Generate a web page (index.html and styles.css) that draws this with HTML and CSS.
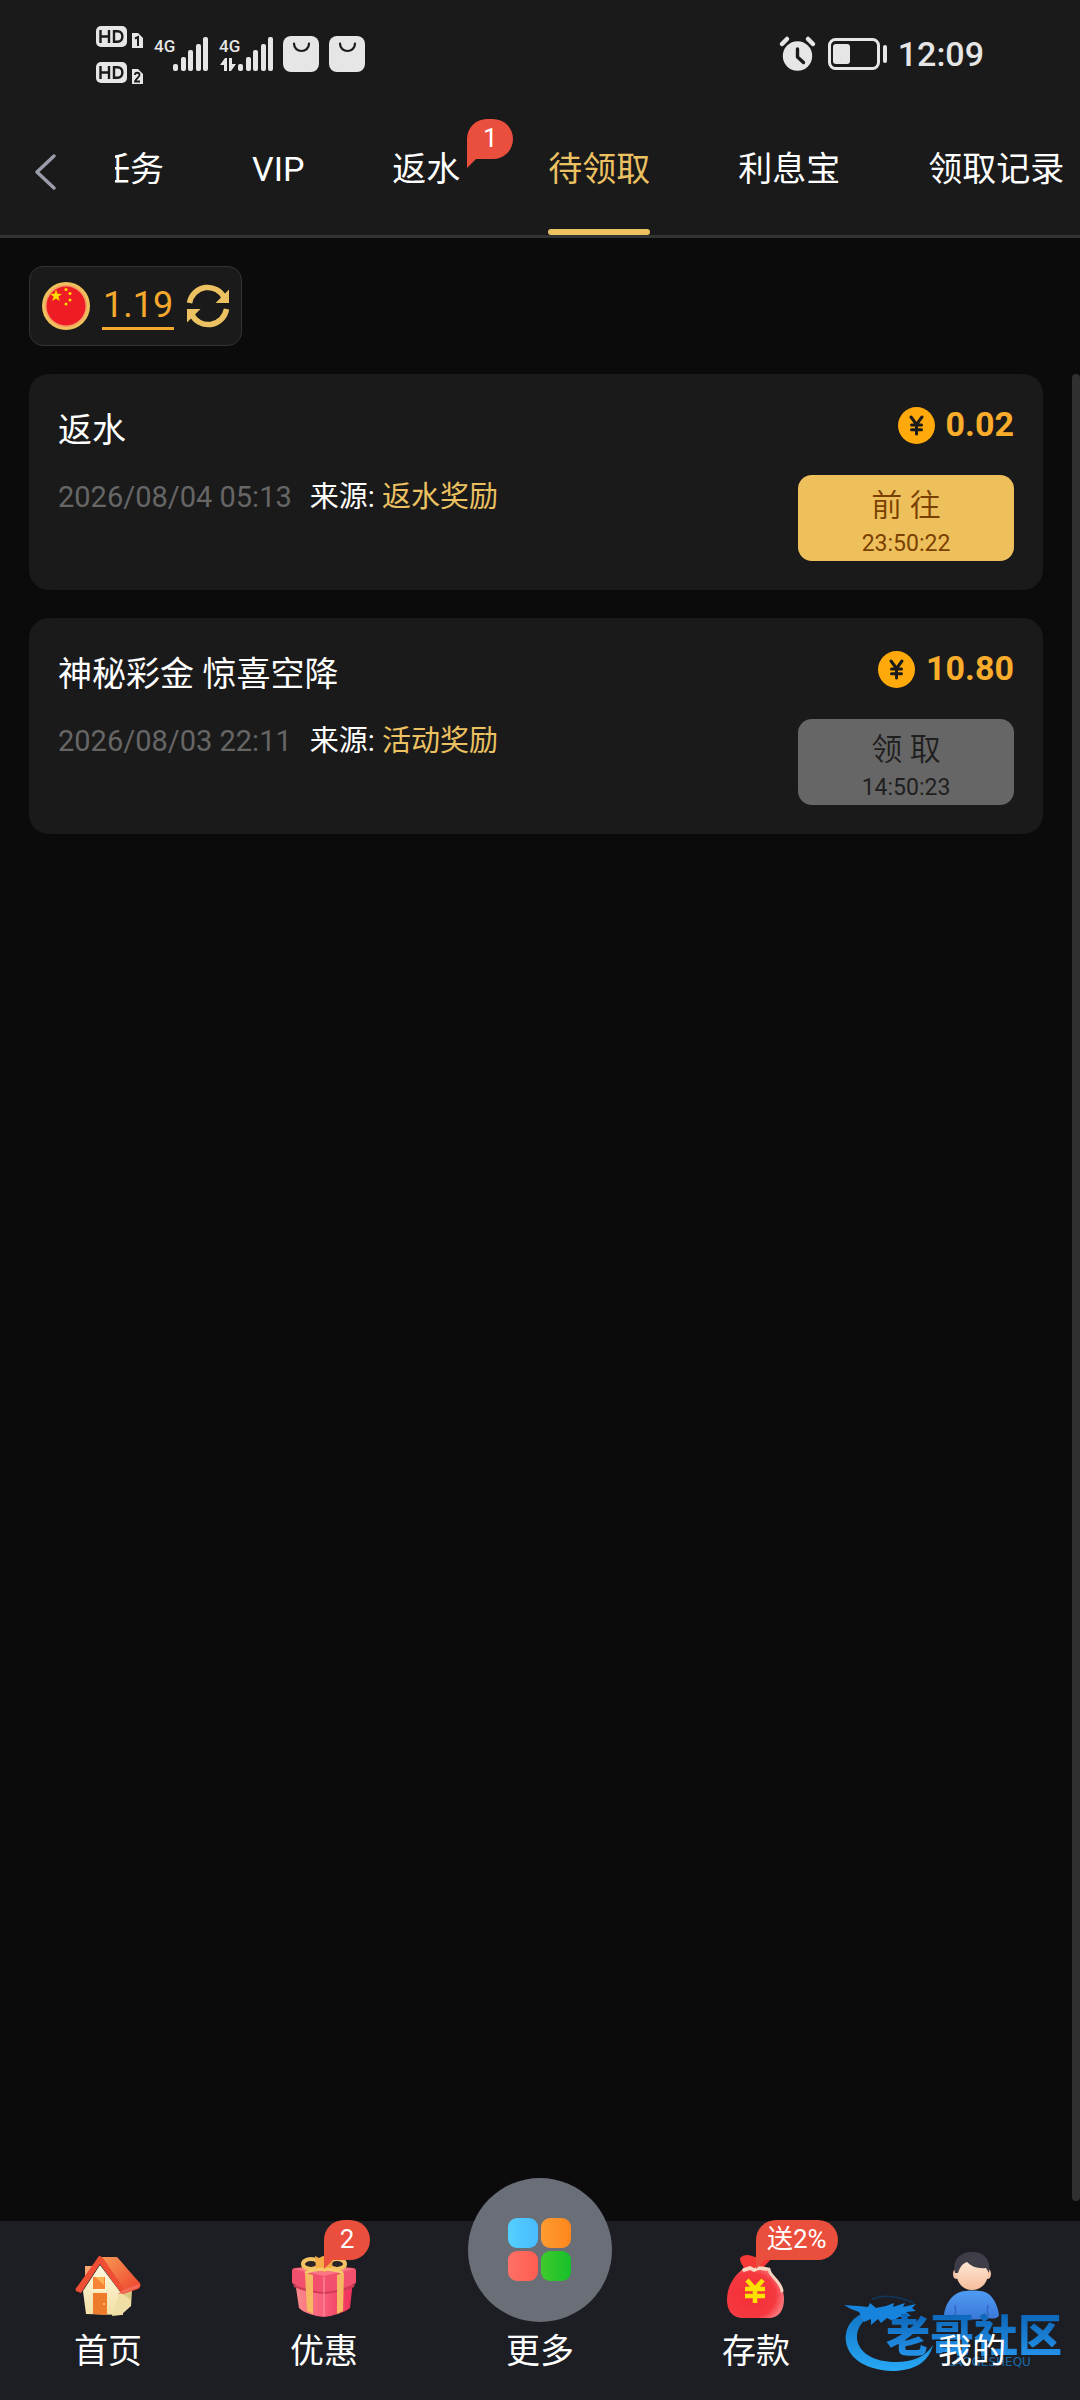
FILE: index.html
```html
<!DOCTYPE html>
<html lang="zh-CN">
<head>
    <meta charset="UTF-8">
    <meta name="viewport" content="width=device-width, initial-scale=1.0">
    <title>待领取</title>
    <link rel="stylesheet" href="styles.css">
</head>
<body>
    <header class="header">
        <div class="status-bar">
            <div class="status-group">
                <svg width="49" height="60" viewBox="0 0 49 60" fill="#e6e6e6">
                    <rect x="0" y="2" width="31" height="21" rx="5"/>
                    <path d="M36 9h6l5 5v10h-11z"/>
                    <rect x="0" y="38" width="31" height="21" rx="5"/>
                    <path d="M36 45h6l5 5v10h-11z"/>
                    <g fill="none" stroke="#1a1a1a" stroke-width="2.4">
                        <path d="M4.500 6v13M13 6v13M4.500 12.500h8.500M18 7.200v10.600h3.500c6.500 0 6.500-10.600 0-10.600z"/>
                        <path d="M4.500 42v13M13 42v13M4.500 48.500h8.500M18 43.200v10.600h3.500c6.500 0 6.500-10.600 0-10.600z"/>
                        <path stroke-width="2" d="M39 14.500l3-1.500v9"/>
                        <path stroke-width="1.800" d="M39 51c0-3 4.500-3 4.500 0 0 2-4 4-4.500 6.500h5"/>
                    </g>
                </svg>
                <svg width="55" height="36" viewBox="0 0 55 36" fill="#e6e6e6">
                    <text class="net" x="-1" y="16">4G</text>
                    <rect x="18" y="28" width="5" height="7" rx="2"/>
                    <rect x="26" y="21" width="5" height="14" rx="2"/>
                    <rect x="33" y="14" width="5" height="21" rx="2"/>
                    <rect x="41" y="8" width="5" height="27" rx="2"/>
                    <rect x="48" y="1" width="5" height="34" rx="2"/>
                </svg>
                <svg width="53" height="36" viewBox="0 0 53 36" fill="#e6e6e6">
                    <text class="net" x="-1" y="16">4G</text>
                    <path d="M0 29l5-7h2v13h-3v-6zM16 28l-5 7h-2V22h3v6z"/>
                    <rect x="18" y="28" width="5" height="7" rx="2"/>
                    <rect x="26" y="21" width="5" height="14" rx="2"/>
                    <rect x="33" y="14" width="5" height="21" rx="2"/>
                    <rect x="41" y="8" width="5" height="27" rx="2"/>
                    <rect x="48" y="1" width="5" height="34" rx="2"/>
                </svg>
                <svg width="36" height="36" viewBox="0 0 36 36">
                    <rect width="36" height="36" rx="8" fill="#e6e6e6"/>
                    <path d="M11 7.500c0 10 15 10 15 0" fill="none" stroke="#1a1a1a" stroke-width="2.200" stroke-linecap="round"/>
                </svg>
                <svg width="36" height="36" viewBox="0 0 36 36">
                    <rect width="36" height="36" rx="8" fill="#e6e6e6"/>
                    <path d="M11 7.500c0 10 15 10 15 0" fill="none" stroke="#1a1a1a" stroke-width="2.200" stroke-linecap="round"/>
                </svg>
            </div>
            <div class="status-group">
                <svg width="36" height="34" viewBox="0 0 36 34">
                    <circle cx="17.500" cy="19" r="14.700" fill="#e6e6e6"/>
                    <path d="M2 7l5-5M33 7l-5-5" stroke="#e6e6e6" stroke-width="4.500" stroke-linecap="round"/>
                    <path d="M17.500 12v8l6 5.500" fill="none" stroke="#1a1a1a" stroke-width="3.400" stroke-linecap="round" stroke-linejoin="round"/>
                </svg>
                <svg width="62" height="34" viewBox="0 0 62 34">
                    <rect x="3.500" y="2.500" width="49" height="29" rx="6" fill="none" stroke="#e6e6e6" stroke-width="3"/>
                    <rect x="7" y="7" width="17" height="20" rx="3" fill="#e6e6e6"/>
                    <rect x="57" y="8" width="4" height="18" rx="2" fill="#e6e6e6"/>
                </svg>
                <span class="clock">12:09</span>
            </div>
        </div>

        <div class="tab-bar">
            <button class="back" type="button" aria-label="返回">
                <svg width="24" height="38" viewBox="0 0 24 38">
                    <path d="M20 3L3 19l17 16" fill="none" stroke="#9b9caa" stroke-width="3.500" stroke-linecap="round" stroke-linejoin="round"/>
                </svg>
            </button>
            <nav class="tabs">
                <a class="tab" href="#">任务</a>
                <a class="tab" href="#">VIP</a>
                <a class="tab" href="#">返水<span class="badge">1</span></a>
                <a class="tab active" href="#">待领取</a>
                <a class="tab" href="#">利息宝</a>
                <a class="tab" href="#">领取记录</a>
            </nav>
        </div>
    </header>

    <main class="content">
        <div class="wallet">
            <svg width="48" height="48" viewBox="0 0 48 48">
                <circle cx="24" cy="24" r="24" fill="#efc15c"/>
                <circle cx="24" cy="24" r="21" fill="#f79a62"/>
                <circle cx="24" cy="24" r="19.500" fill="#ee1c25"/>
                <g fill="#ffde00">
                    <path d="M14 7.500l1.500 4.300 4.500.1-3.600 2.700 1.300 4.400-3.700-2.600-3.700 2.600 1.300-4.400L8 11.900l4.500-.1z"/>
                    <circle cx="24" cy="7.500" r="1.500"/>
                    <circle cx="28" cy="11.500" r="1.500"/>
                    <circle cx="28" cy="18" r="1.500"/>
                    <circle cx="24" cy="22" r="1.500"/>
                </g>
            </svg>
            <a class="balance" href="#">1.19</a>
            <button class="refresh" type="button" aria-label="刷新">
                <svg width="44" height="46" viewBox="0 0 44 46">
                    <path d="M3.500 20a18.500 18.500 0 0 1 35-5M40.500 26a18.500 18.500 0 0 1-35 5" fill="none" stroke="#ebc161" stroke-width="5.500"/>
                    <path d="M43 6.500V20H29.500zM1 39.500V26h13.500z" fill="#ebc161"/>
                </svg>
            </button>
        </div>

        <div class="list">
            <article class="card">
                <div class="info">
                    <h2 class="title">返水</h2>
                    <p class="meta"><time class="date">2026/08/04 05:13</time><span>来源: <em class="source">返水奖励</em></span></p>
                </div>
                <div class="side">
                    <div class="amount">
                        <svg width="37" height="37" viewBox="0 0 37 37">
                            <circle cx="18.500" cy="18.500" r="18.500" fill="#ffa90a"/>
                            <path d="M13 10l5.500 7.500L24 10M18.500 17.500V27M13.500 18h10M13.500 22.800h10" fill="none" stroke="#1b1b1b" stroke-width="3" stroke-linecap="round"/>
                        </svg>
                        <span>0.02</span>
                    </div>
                    <button class="claim" type="button">
                        <span class="claim-text">前 往</span>
                        <span class="countdown">23:50:22</span>
                    </button>
                </div>
            </article>

            <article class="card">
                <div class="info">
                    <h2 class="title">神秘彩金 惊喜空降</h2>
                    <p class="meta"><time class="date">2026/08/03 22:11</time><span>来源: <em class="source">活动奖励</em></span></p>
                </div>
                <div class="side">
                    <div class="amount">
                        <svg width="37" height="37" viewBox="0 0 37 37">
                            <circle cx="18.500" cy="18.500" r="18.500" fill="#ffa90a"/>
                            <path d="M13 10l5.500 7.500L24 10M18.500 17.500V27M13.500 18h10M13.500 22.800h10" fill="none" stroke="#1b1b1b" stroke-width="3" stroke-linecap="round"/>
                        </svg>
                        <span>10.80</span>
                    </div>
                    <button class="claim" type="button" disabled>
                        <span class="claim-text">领 取</span>
                        <span class="countdown">14:50:23</span>
                    </button>
                </div>
            </article>
            <div class="scroll-thumb"></div>
        </div>
    </main>

    <nav class="bottom-nav">
        <a class="nav-item" href="#">
            <svg class="nav-icon" viewBox="0 0 66 66">
                <defs>
                    <linearGradient id="roof" x1="0" y1="0" x2="1" y2="1">
                        <stop offset="0" stop-color="#f79a55"/>
                        <stop offset="1" stop-color="#ee3f2c"/>
                    </linearGradient>
                    <linearGradient id="wall" x1="0" y1="0" x2="0" y2="1">
                        <stop offset="0" stop-color="#fff8e0"/>
                        <stop offset="1" stop-color="#f3e0a4"/>
                    </linearGradient>
                </defs>
                <path d="M10 13h7v9l-7 8z" fill="#f5a873"/>
                <path d="M8 38L25 12l21 28 2 22-37-1z" fill="url(#wall)"/>
                <path d="M44 40l13-4-1 17-10 9-9 1z" fill="#efdfa6"/>
                <path d="M45 39l11-3v11z" fill="#dcc780"/>
                <path d="M25 4h17c3 3 19 22 23 26 1 3 0 5-2 6l-15 5c-2-1-17-22-23-31z" fill="url(#roof)"/>
                <path d="M24 3c2 0 3 1 4 2l21 31c1 2 0 4-2 5L25 11 6 40l-5-2c-1-2 0-3 1-4z" fill="#f04e34"/>
                <path d="M43 41c8-1 14-4 21-7l1-3-17 6z" fill="#f36b59"/>
                <path d="M18 24h12v12H18z" fill="#f58436"/>
                <path d="M20 24h9v8z" fill="#fbb257"/>
                <path d="M16 37h15" stroke="#fff4cd" stroke-width="2"/>
                <path d="M18 40h14v22l-14-1z" fill="#ef7c2c"/>
                <circle cx="29" cy="51" r="1" fill="#ffd27f"/>
            </svg>
            <span class="nav-label">首页</span>
        </a>
        <a class="nav-item" href="#">
            <span class="nav-icon">
                <svg class="nav-icon" viewBox="0 0 66 66">
                    <defs>
                        <linearGradient id="box" x1="0" y1="0" x2="1" y2="0">
                            <stop offset="0" stop-color="#fb8d8c"/>
                            <stop offset=".5" stop-color="#f95c78"/>
                            <stop offset="1" stop-color="#ee2f5a"/>
                        </linearGradient>
                    </defs>
                    <path d="M4 28h58l-3 27c-6 5-18 8-26 9-10-1-20-4-25-9z" fill="url(#box)"/>
                    <path d="M1 18c0-2 1-3 3-3l29-3 29 3c2 0 3 1 3 3v12c-9 5-20 8-32 9C20 38 10 35 1 30z" fill="#f2506c"/>
                    <path d="M2 16l31-4 31 4-31 7z" fill="#fb7585"/>
                    <path d="M2 31c9 4 19 7 31 8 12-1 22-4 31-8l-1 3c-9 4-19 6-30 7-11-1-21-3-30-7z" fill="#cf3a55"/>
                    <path d="M14 20l8 2v39l-6-3zM46 22l7-2-1 38-6 3z" fill="#f7b863"/>
                    <ellipse cx="20" cy="11" rx="8" ry="5" fill="#2a2429" stroke="#f3c364" stroke-width="4"/>
                    <ellipse cx="46" cy="11" rx="8" ry="5" fill="#2a2429" stroke="#f3c364" stroke-width="4"/>
                    <path d="M24 3l4 2 4-2 7 2 3-2-1 12-7 4-9-3z" fill="#f6ad45"/>
                    <path d="M14 20c10-5 28-5 38 0" fill="none" stroke="#f8c96b" stroke-width="3"/>
                    <path d="M33 24v39" stroke="#ff9aa4" stroke-width="1"/>
                </svg>
                <span class="badge">2</span>
            </span>
            <span class="nav-label">优惠</span>
        </a>
        <a class="nav-item" href="#">
            <span class="more">
                <svg width="64" height="64" viewBox="0 0 64 64">
                    <defs>
                        <linearGradient id="blue"><stop offset="0" stop-color="#55cfff"/><stop offset="1" stop-color="#48bcff"/></linearGradient>
                        <linearGradient id="orange"><stop offset="0" stop-color="#ff9c30"/><stop offset="1" stop-color="#ff861c"/></linearGradient>
                        <linearGradient id="red"><stop offset="0" stop-color="#ff7067"/><stop offset="1" stop-color="#ff5d50"/></linearGradient>
                        <linearGradient id="green"><stop offset="0" stop-color="#40ca2c"/><stop offset="1" stop-color="#16bf2a"/></linearGradient>
                    </defs>
                    <rect x="0" y="0" width="30" height="30" rx="9" fill="url(#blue)"/>
                    <rect x="33" y="0" width="30" height="30" rx="9" fill="url(#orange)"/>
                    <rect x="0" y="33" width="30" height="30" rx="9" fill="url(#red)"/>
                    <rect x="33" y="33" width="30" height="30" rx="9" fill="url(#green)"/>
                </svg>
            </span>
            <span class="nav-label">更多</span>
        </a>
        <a class="nav-item" href="#">
            <span class="nav-icon">
                <svg class="nav-icon" viewBox="0 0 66 66">
                    <defs>
                        <radialGradient id="bag" cx=".4" cy=".55" r=".6">
                            <stop offset="0" stop-color="#f52f38"/>
                            <stop offset=".75" stop-color="#f5383f"/>
                            <stop offset="1" stop-color="#fb7376"/>
                        </radialGradient>
                    </defs>
                    <path d="M17 5c5-4 8-3 12-2 5 2 8 0 12 1 3 1 5 0 7 1-2 5-6 6-8 11H21c-1-5-4-5-4-11z" fill="#f43936"/>
                    <path d="M21 15h20c8 5 20 16 20 31 0 13-6 18-14 19H18C9 64 4 57 4 47c0-15 8-25 17-32z" fill="url(#bag)"/>
                    <path d="M21 17l6-2 4 2 5-2 8 1" fill="none" stroke="#fad9c4" stroke-width="3.500" stroke-linecap="round"/>
                    <path d="M46 16c0 7 12 12 13 22" fill="none" stroke="#f5d2be" stroke-width="3" stroke-linecap="round"/>
                    <path d="M24 27l8 9 8-9M32 36v14M22 36h20M22 43h20" fill="none" stroke="#ffe100" stroke-width="4.500"/>
                </svg>
                <span class="badge">送2%</span>
            </span>
            <span class="nav-label">存款</span>
        </a>
        <a class="nav-item" href="#">
            <svg class="nav-icon" viewBox="0 0 66 66">
                <defs>
                    <linearGradient id="shirt" x1="0" y1="0" x2="0" y2="1">
                        <stop offset="0" stop-color="#4f9cf3"/>
                        <stop offset="1" stop-color="#3a78d8"/>
                    </linearGradient>
                    <linearGradient id="face" x1="0" y1="0" x2="0" y2="1">
                        <stop offset="0" stop-color="#ffe9d6"/>
                        <stop offset="1" stop-color="#f6bd9d"/>
                    </linearGradient>
                </defs>
                <path d="M21 39c7-2 18-2 25 0 8 3 13 14 14 23-1 4-7 4-11 3-8 2-24 2-32 0-5 1-11 1-12-3 1-10 7-20 16-23z" fill="url(#shirt)"/>
                <path d="M16 64c1-5 1-8 0-12M49 64c-1-5-1-8 0-12" fill="none" stroke="#2f68c0" stroke-width="1.500"/>
                <ellipse cx="17" cy="21" rx="3" ry="5" fill="#f6c4a6"/>
                <ellipse cx="49" cy="21" rx="3" ry="5" fill="#f6c4a6"/>
                <path d="M17 15c2-10 30-10 32 0 2 13-6 22-16 22s-17-9-16-22z" fill="url(#face)"/>
                <path d="M16 20C13 7 21-1 33-1c13 0 19 8 17 21l-3-5c-8 1-14-1-19-6-5 2-7 5-9 11z" fill="#3f3d47"/>
            </svg>
            <span class="nav-label">我的</span>
        </a>

        <div class="watermark">
            <svg class="dragon" width="92" height="78" viewBox="0 0 92 78">
                <defs>
                    <linearGradient id="dragon" x1="0" y1="0" x2="0" y2="1">
                        <stop offset="0" stop-color="#1272c4"/>
                        <stop offset="1" stop-color="#27a8f5"/>
                    </linearGradient>
                </defs>
                <path d="M30 13C10 18 0 30 2 46c3 18 22 28 46 29 22 0 37-9 41-26-8 12-20 17-37 17-22 0-37-9-39-23-1-12 7-22 22-26z" fill="url(#dragon)"/>
                <path d="M0 9l14 1 10 1 2-4 6 5 10-2 8-3-1 4 12-4-2 4 13-3-4 4 4 3-10 1 5 4-12 1-6 4-6-3-6 5-3-4-7 6v-6l-7 3-5-10-8-3z" fill="#1683dc"/>
                <path d="M28 3c12-5 26-3 42 4" fill="none" stroke="#10385c" stroke-width="1.500"/>
            </svg>
            <div class="wm-text">
                <strong>老哥社区</strong>
                <small>LAOGESHEQU</small>
            </div>
        </div>
    </nav>
</body>
</html>
```
FILE: styles.css
```css
* {
    box-sizing: border-box;
}

body {
    margin: 0;
    min-height: 100vh;
    display: flex;
    flex-direction: column;
    background: #0b0b0b;
    color: #fff;
    font-family: Roboto, "Noto Sans CJK SC", sans-serif;
    font-size: 34px;
}

a {
    color: inherit;
    text-decoration: none;
}

button {
    padding: 0;
    border: none;
    background: none;
    font-family: inherit;
    cursor: pointer;
}

svg {
    display: block;
    overflow: visible;
}

h2, p {
    margin: 0;
    font-weight: 400;
}

/* header */
.header {
    background: #1a1a1a;
    border-bottom: 3px solid #333;
}

.status-bar {
    height: 108px;
    padding: 0 96px;
    display: flex;
    justify-content: space-between;
    align-items: center;
}

.status-group {
    display: flex;
    align-items: center;
    gap: 10px;
    color: #e6e6e6;
}

.net {
    font-size: 17px;
    font-weight: 500;
}

.clock {
    font-weight: 500;
}

.tab-bar {
    display: flex;
    height: 127px;
}

.back {
    width: 115px;
    flex-shrink: 0;
    padding-left: 34px;
}

.tabs {
    flex: 1;
    display: flex;
    gap: 88px;
    overflow: hidden;
}

.tab {
    position: relative;
    flex-shrink: 0;
    padding: 36px 0;
    line-height: 50px;
    white-space: nowrap;
}

/* the list is scrolled a little to the right */
.tab:first-child {
    margin-left: -19px;
}

.tab.active {
    color: #ebc161;
}

.tab.active::after {
    content: "";
    position: absolute;
    left: 0;
    right: 0;
    bottom: 0;
    height: 6px;
    border-radius: 3px;
    background: #ebc161;
}

.badge {
    position: absolute;
    left: 100%;
    top: 11px;
    margin-left: 7px;
    min-width: 46px;
    height: 40px;
    padding: 0 11px;
    border-radius: 20px 20px 20px 0;
    background: #ea4e3d;
    color: #fff;
    font-size: 26px;
    line-height: 38px;
    text-align: center;
    white-space: nowrap;
}

.badge::after {
    content: "";
    position: absolute;
    left: 0;
    top: 100%;
    border-top: 9px solid #ea4e3d;
    border-right: 9px solid transparent;
}

/* content */
.content {
    flex: 1;
    display: flex;
    flex-direction: column;
    align-items: flex-start;
    gap: 28px;
    padding: 28px 0 20px 29px;
}

.wallet {
    display: flex;
    align-items: center;
    gap: 12px;
    height: 80px;
    padding: 0 11px 0 12px;
    border: 1px solid #333;
    border-radius: 14px;
    background: #1a1a1a;
}

.balance {
    height: 48px;
    padding: 0 1px;
    border-bottom: 3px solid #f5a92c;
    color: #f5a92c;
    font-size: 36px;
    line-height: 46px;
}

.list {
    position: relative;
    flex: 1;
    align-self: stretch;
    display: flex;
    flex-direction: column;
    gap: 28px;
    padding-right: 37px;
}

.scroll-thumb {
    position: absolute;
    top: 0;
    right: 0;
    bottom: 0;
    width: 8px;
    border-radius: 4px;
    background: #303030;
}

.card {
    display: flex;
    justify-content: space-between;
    padding: 29px;
    border-radius: 20px;
    background: #1a1a1a;
}

.title {
    font-size: 34px;
    line-height: 54px;
}

.meta {
    display: flex;
    gap: 18px;
    margin-top: 20px;
    font-size: 29px;
    line-height: 40px;
}

.date {
    color: #666;
}

.source {
    color: #ebc161;
    font-style: normal;
}

.side {
    display: flex;
    flex-direction: column;
    align-items: flex-end;
    gap: 28px;
}

.amount {
    display: flex;
    align-items: flex-end;
    gap: 11px;
    height: 44px;
    padding-bottom: 3px;
    color: #f9ad2a;
    font-weight: 700;
    line-height: 40px;
}

.claim {
    display: flex;
    flex-direction: column;
    align-items: center;
    width: 216px;
    height: 86px;
    padding-top: 8px;
    border-radius: 14px;
    background: #eec05c;
    color: #7a4000;
}

.claim:disabled {
    background: #666;
    color: #1f1f1f;
}

.claim-text {
    font-size: 31px;
    font-weight: 350;
    line-height: 46px;
}

.countdown {
    font-size: 23px;
    line-height: 30px;
}

/* bottom navigation */
.bottom-nav {
    position: relative;
    display: flex;
    padding: 32px 0 28px;
    background: #1d1e23;
}

.nav-item {
    flex: 1;
    display: flex;
    flex-direction: column;
    align-items: center;
    gap: 11px;
}

.nav-icon {
    position: relative;
    width: 66px;
    height: 66px;
}

.nav-icon .badge {
    left: 50%;
    top: -33px;
    margin-left: 0;
}

.more {
    display: flex;
    justify-content: center;
    align-items: center;
    width: 144px;
    height: 144px;
    margin: -75px 0 -3px;
    border-radius: 50%;
    background: #6a6e77;
}

.nav-label {
    position: relative;
    z-index: 1;
    line-height: 42px;
}

.watermark {
    position: absolute;
    right: 18px;
    bottom: 26px;
    display: flex;
    align-items: flex-end;
}

.dragon {
    margin-right: -50px;
}

.wm-text {
    display: flex;
    flex-direction: column;
    align-items: center;
    margin-bottom: 6px;
    font-family: "Noto Sans CJK SC", sans-serif;
}

.wm-text strong {
    font-size: 44px;
    font-weight: 900;
    line-height: 46px;
    background: linear-gradient(#0b62b4, #2492e8);
    -webkit-background-clip: text;
    background-clip: text;
    color: transparent;
}

.wm-text small {
    margin-left: 30px;
    color: #1b6aa8;
    font-family: "DejaVu Sans", sans-serif;
    font-size: 12px;
    line-height: 12px;
}
```
